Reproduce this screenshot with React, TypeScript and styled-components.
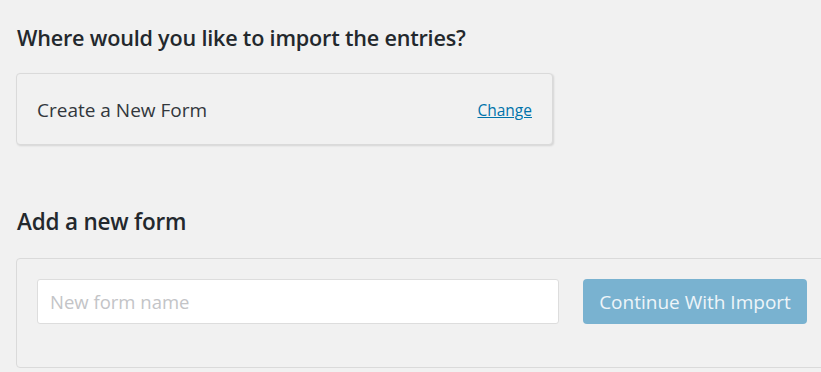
import React, { useState } from "react";
import styled, { createGlobalStyle } from "styled-components";

const GlobalStyle = createGlobalStyle`
  html, body {
    margin: 0;
    padding: 0;
    background: #f1f1f1;
    font-family: "Open Sans", "Noto Sans", sans-serif;
    color: #23282d;
  }
  * { box-sizing: border-box; }
`;

const Page = styled.div`
  padding: 20px 0 0 16px;
  width: 821px;
  overflow: hidden;
  height: 372px;
`;

const Heading = styled.h2<{ size?: number }>`
  margin: 0 0 0 1px;
  font-size: ${p => p.size ?? 22}px;
  line-height: 36px;
  font-weight: 600;
  color: #23282d;
  letter-spacing: -0.2px;
`;

const SelectedCard = styled.div`
  margin-top: 17px;
  width: 537px;
  height: 72px;
  display: flex;
  align-items: center;
  justify-content: space-between;
  padding: 0 20px;
  background: #f1f1f1;
  border: 1px solid #dadada;
  border-radius: 4px;
  box-shadow: 1px 1px 2px rgba(0, 0, 0, 0.12);
`;

const Selected = styled.span`
  font-size: 19px;
  color: #32373c;
  margin-top: 1px;
`;

const ChangeLink = styled.a`
  font-size: 15.5px;
  color: #0073aa;
  text-decoration: underline;
  cursor: pointer;
  margin-top: 2px;
`;

const Section = styled.div`
  margin-top: 59px;
`;

const FormCard = styled.div`
  margin-top: 18px;
  width: 830px;
  padding: 20px 20px 43px;
  display: flex;
  align-items: flex-start;
  gap: 24px;
  border: 1px solid #dadada;
  border-radius: 4px;
  background: #f1f1f1;
`;

const NameInput = styled.input`
  width: 522px;
  height: 45px;
  padding: 0 12px;
  font-family: inherit;
  font-size: 18.5px;
  color: #32373c;
  background: #fff;
  border: 1px solid #dddddd;
  border-radius: 3px;
  outline: none;
  &::placeholder { color: #c3c4c7; }
`;

const ContinueButton = styled.button<{ disabled?: boolean }>`
  height: 45px;
  width: 224px;
  padding: 0;
  font-family: inherit;
  font-size: 19px;
  color: #eef5f9;
  background: #79b2d0;
  border: none;
  border-radius: 4px;
  cursor: ${p => (p.disabled ? "default" : "pointer")};
`;

export default function App() {
  const [name, setName] = useState("");
  return (
    <>
      <GlobalStyle />
      <Page>
        <Heading size={21.6}>Where would you like to import the entries?</Heading>
        <SelectedCard>
          <Selected>Create a New Form</Selected>
          <ChangeLink>Change</ChangeLink>
        </SelectedCard>
        <Section>
          <Heading size={22.5}>Add a new form</Heading>
          <FormCard>
            <NameInput
              placeholder="New form name"
              value={name}
              onChange={e => setName(e.currentTarget.value)}
            />
            <ContinueButton disabled={!name}>Continue With Import</ContinueButton>
          </FormCard>
        </Section>
      </Page>
    </>
  );
}
